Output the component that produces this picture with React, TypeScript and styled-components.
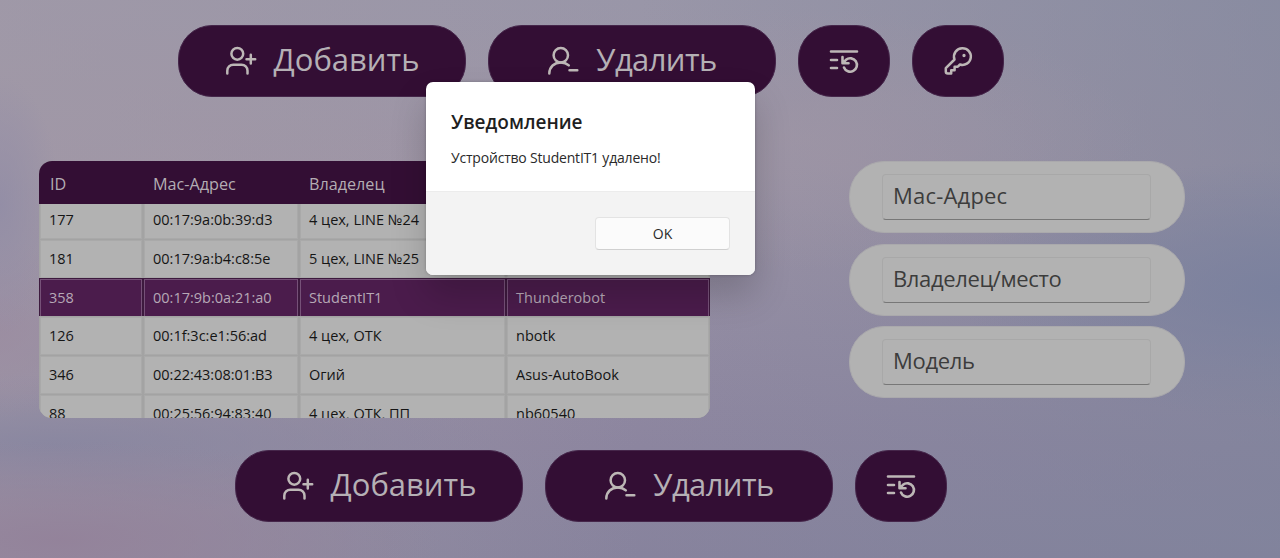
import React from 'react';
import styled, { createGlobalStyle } from 'styled-components';

const GlobalStyle = createGlobalStyle`
  * { box-sizing: border-box; }
  body { margin: 0; font-family: 'Open Sans', 'Noto Sans', sans-serif; }
`;

const Page = styled.div`
  position: relative;
  width: 1280px;
  height: 558px;
  overflow: hidden;
  padding-top: 25px;
  background:
    radial-gradient(ellipse 380px 100px at 60px 540px, rgba(147, 130, 154, 0.95), rgba(147, 130, 154, 0) 100%),
    radial-gradient(ellipse 60px 130px at 0px 205px, rgba(146, 141, 166, 0.9), rgba(146, 141, 166, 0) 100%),
    radial-gradient(ellipse 110px 90px at 0px 330px, rgba(155, 139, 160, 0.7), rgba(155, 139, 160, 0) 100%),
    radial-gradient(ellipse 450px 70px at 60px 445px, rgba(136, 134, 160, 0.9), rgba(136, 134, 160, 0) 100%),
    radial-gradient(ellipse 330px 130px at 1290px 290px, rgba(121, 128, 158, 0.9), rgba(121, 128, 158, 0) 100%),
    radial-gradient(ellipse 340px 130px at 800px 140px, rgba(158, 149, 165, 0.7), rgba(158, 149, 165, 0) 100%),
    linear-gradient(90deg, rgba(163, 154, 167, 0.6) 0%, rgba(150, 147, 165, 0) 50%, rgba(124, 131, 155, 0.55) 100%),
    linear-gradient(180deg, #9996a8 0%, #9d94a5 30%, #928ba2 60%, #8c859f 80%, #87839d 100%);
`;

const Toolbar = styled.div<{ $offset: number }>`
  display: flex;
  gap: 22px;
  height: 72px;
  padding-left: ${(p) => p.$offset}px;
`;

const PillButton = styled.button<{ $compact?: boolean }>`
  display: flex;
  align-items: center;
  justify-content: center;
  flex: none;
  gap: 17px;
  width: ${(p) => (p.$compact ? 92 : 288)}px;
  height: 72px;
  padding: 0;
  border: 1px solid #45264a;
  border-radius: 34px;
  background: #330e34;
  color: #b5b0b5;
  font: 400 31px/40px 'Open Sans', 'Noto Sans', sans-serif;
  svg { flex: none; }
`;

const Label = styled.span<{ $spacing?: number }>`
  position: relative;
  top: -2px;
  letter-spacing: ${(p) => p.$spacing ?? 0}px;
`;

const Content = styled.div`
  display: flex;
  align-items: flex-start;
  gap: 139px;
  height: 289px;
  margin-top: 64px;
  padding-left: 39px;
`;

const Table = styled.div`
  width: 671px;
  height: 257px;
  overflow: hidden;
  border-radius: 13px;
  background: #a6a6a6;
`;

const columns = '104px 156px 207px 204px';

const HeaderRow = styled.div`
  display: grid;
  grid-template-columns: ${columns};
  height: 43px;
  line-height: 46px;
  background: #330e34;
  color: #b3adb3;
  font-size: 16.2px;
  span { padding-left: 10px; }
  span:first-child { padding-left: 11px; }
`;

const Rows = styled.div`
  height: 214px;
  overflow: hidden;
  display: flex;
  flex-direction: column;
`;

const Row = styled.div<{ $selected?: boolean; $cut?: boolean }>`
  display: grid;
  grid-template-columns: ${columns};
  flex: none;
  height: 38.8px;
  margin-top: ${(p) => (p.$cut ? -4 : 0)}px;
  background: ${(p) => (p.$selected ? '#3d1a3e' : '#a3a3a3')};
`;

const Cell = styled.div<{ $selected?: boolean }>`
  margin: 1px 1px 0 1px;
  padding-left: 8px;
  border: 1px solid ${(p) => (p.$selected ? '#765178' : '#a9a9a9')};
  background: ${(p) => (p.$selected ? '#4b1c4c' : '#b2b2b2')};
  color: ${(p) => (p.$selected ? '#b6a8b6' : '#151515')};
  font-size: 14.5px;
  line-height: 36px;
  white-space: nowrap;
`;

const Form = styled.div`
  display: flex;
  flex-direction: column;
  gap: 10.7px;
`;

const FieldPill = styled.label`
  display: flex;
  align-items: center;
  justify-content: center;
  width: 336px;
  height: 72px;
  padding-right: 1px;
  border: 1px solid #aaa9ac;
  border-radius: 35px;
  background: #b2b2b2;
`;

const Input = styled.input<{ $spacing: number }>`
  width: 269px;
  height: 46px;
  padding: 0 10px 4px;
  border: 1px solid #a8a8a8;
  border-bottom-color: #777;
  border-radius: 4px;
  outline: none;
  background: #b2b2b2;
  font: 400 22px/30px 'Open Sans', 'Noto Sans', sans-serif;
  letter-spacing: ${(p) => p.$spacing}px;
  &::placeholder { color: #3c3c3c; opacity: 1; }
`;

const Dialog = styled.div`
  position: absolute;
  left: 426px;
  top: 82px;
  width: 329px;
  height: 193px;
  overflow: hidden;
  border-radius: 7px;
  background: #fff;
  box-shadow: 0 20px 36px rgba(0, 0, 0, 0.18), 0 0 3px rgba(0, 0, 0, 0.25);
`;

const DialogBody = styled.div`
  height: 110px;
  padding: 26px 25px 0;
  border-bottom: 1px solid #ececec;
`;

const DialogTitle = styled.h2`
  margin: 0;
  color: #1f1f1f;
  font-size: 19px;
  font-weight: 600;
  line-height: 28px;
`;

const DialogText = styled.p`
  margin: 12px 0 0;
  color: #2a2a2a;
  font-size: 14px;
  line-height: 20px;
  letter-spacing: -0.2px;
`;

const DialogFooter = styled.div`
  display: flex;
  justify-content: flex-end;
  height: 83px;
  padding: 25px 25px 0;
  background: #f3f3f3;
`;

const OkButton = styled.button`
  width: 135px;
  height: 33px;
  border: 1px solid #e3e3e3;
  border-bottom-color: #d0d0d0;
  border-radius: 4px;
  background: #fbfbfb;
  color: #2b2b2b;
  font: 400 14px/20px 'Open Sans', 'Noto Sans', sans-serif;
`;

const stroke = {
  fill: 'none',
  stroke: '#bdb7b6',
  strokeWidth: 2.5,
  strokeLinecap: 'round' as const,
  strokeLinejoin: 'round' as const,
};

const UserPlus = () => (
  <svg width="32" height="30" viewBox="0 0 32 30" {...stroke}>
    <circle cx="12.3" cy="7.8" r="5.9" />
    <path d="M2.300 27.500v-2.800a6 6 0 0 1 6-6h8.200a6 6 0 0 1 6 6v2.800M21.500 13.200h8.700M25.800 8.800v8.800" />
  </svg>
);

const UserMinus = () => (
  <svg width="32" height="30" viewBox="0 0 32 30" {...stroke}>
    <circle cx="13.800" cy="9.200" r="7.200" />
    <path d="M2.300 27.500c0-6.500 5-11.100 11.500-11.100 3.200 0 6 1.100 8 3M22.500 24.200h7.800" />
  </svg>
);

const ListUndo = () => (
  <svg width="30" height="26" viewBox="0 0 30 26" {...stroke} strokeWidth={2.600}>
    <path d="M2 3.500h26M2 12h6M2 20h6M13.500 9v6.200h6M13.800 15l3.200-3.200a6.700 6.700 0 1 1-2 7.700" />
  </svg>
);

const KeyIcon = () => (
  <svg width="30" height="30" viewBox="0 0 30 30" {...stroke}>
    <path d="M19.500 2.300a8.300 8.300 0 0 0-8 11.200L2.800 22.200v3.300a2 2 0 0 0 2 2h3.400v-3.300h3.400v-3.500h3.200l2.200-2.200A8.300 8.300 0 1 0 19.500 2.300z" />
    <circle cx="21" cy="9.500" r="0.900" fill="#bdb7b6" strokeWidth="1.500" />
  </svg>
);

const devices = [
  ['177', '00:17:9a:0b:39:d3', '4 цех, LINE №24', ''],
  ['181', '00:17:9a:b4:c8:5e', '5 цех, LINE №25', ''],
  ['358', '00:17:9b:0a:21:a0', 'StudentIT1', 'Thunderobot'],
  ['126', '00:1f:3c:e1:56:ad', '4 цех, ОТК', 'nbotk'],
  ['346', '00:22:43:08:01:B3', 'Огий', 'Asus-AutoBook'],
  ['88', '00:25:56:94:83:40', '4 цех, ОТК, ПП', 'nb60540'],
];

const fields = [
  { name: 'Мас-Адрес', spacing: 0.2 },
  { name: 'Владелец/место', spacing: -0.36 },
  { name: 'Модель', spacing: -0.3 },
];

const MainActions = () => (
  <>
    <PillButton><UserPlus /><Label>Добавить</Label></PillButton>
    <PillButton><UserMinus /><Label $spacing={-0.6}>Удалить</Label></PillButton>
    <PillButton $compact><ListUndo /></PillButton>
  </>
);

export default function App() {
  return (
    <>
      <GlobalStyle />
      <Page>
        <Toolbar $offset={178}>
          <MainActions />
          <PillButton $compact><KeyIcon /></PillButton>
        </Toolbar>
        <Content>
          <Table>
            <HeaderRow>
              <span>ID</span>
              <span>Мас-Адрес</span>
              <span>Владелец</span>
              <span />
            </HeaderRow>
            <Rows>
              {devices.map((device, i) => (
                <Row key={device[0]} $selected={device[0] === '358'} $cut={i === 0}>
                  {device.map((value, c) => (
                    <Cell key={c} $selected={device[0] === '358'}>{value}</Cell>
                  ))}
                </Row>
              ))}
            </Rows>
          </Table>
          <Form>
            {fields.map(({ name, spacing }) => (
              <FieldPill key={name}><Input placeholder={name} $spacing={spacing} /></FieldPill>
            ))}
          </Form>
        </Content>
        <Toolbar $offset={235}>
          <MainActions />
        </Toolbar>
        <Dialog role="dialog">
          <DialogBody>
            <DialogTitle>Уведомление</DialogTitle>
            <DialogText>Устройство StudentIT1 удалено!</DialogText>
          </DialogBody>
          <DialogFooter><OkButton>OK</OkButton></DialogFooter>
        </Dialog>
      </Page>
    </>
  );
}
